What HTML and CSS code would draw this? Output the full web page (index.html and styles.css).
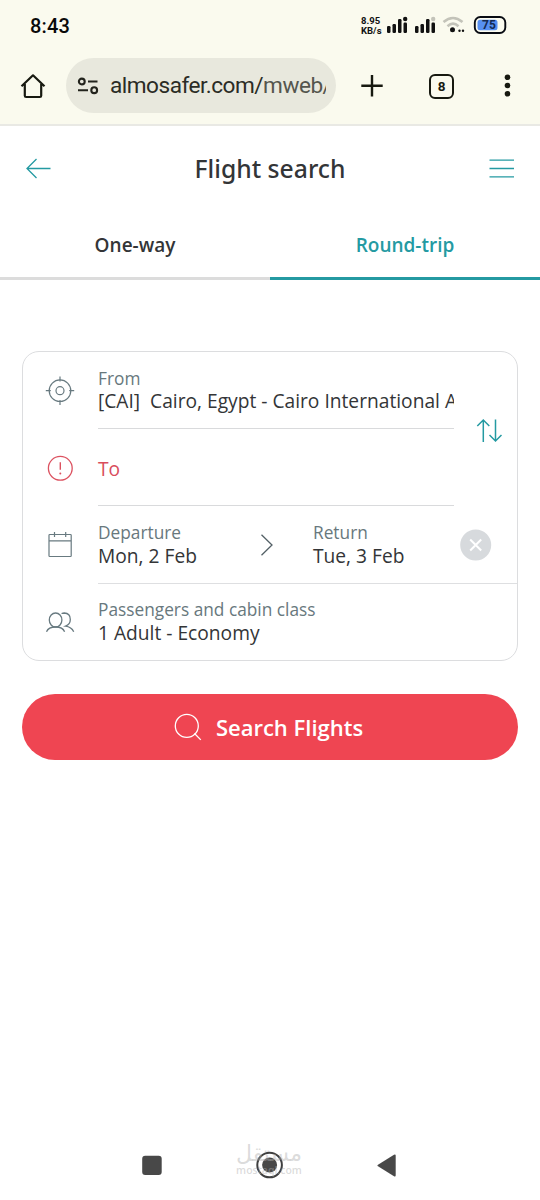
FILE: index.html
```html
<!DOCTYPE html>
<html lang="en">
<head>
<meta charset="utf-8">
<title>Flight search</title>
<link rel="stylesheet" href="styles.css">
</head>
<body>
<div class="browser">
  <div class="status">
    <span class="time">8:43</span>
    <span class="speed"><span>8.95</span><span>KB/s</span></span>
    <svg class="signals" width="150" height="22" viewBox="0 0 150 22">
      <g fill="#111">
        <rect x="2" y="14" width="3.5" height="7" rx="1.2"/><rect x="7.5" y="12" width="3.5" height="9" rx="1.2"/><rect x="13" y="7" width="3.5" height="14" rx="1.2"/><rect x="18.5" y="10.500" width="3.5" height="10.500" rx="1.2"/><circle cx="20.2" cy="7" r="2.2"/>
        <rect x="30" y="14" width="3.5" height="7" rx="1.2"/><rect x="35.500" y="12" width="3.500" height="9" rx="1.2"/><rect x="41" y="7" width="3.500" height="14" rx="1.2"/><rect x="46.500" y="10.500" width="3.500" height="10.500" rx="1.2"/>
        <circle cx="67.500" cy="17.700" r="2.500"/><circle cx="74.500" cy="18.700" r="1.200"/><circle cx="78" cy="18.700" r="1.200"/>
      </g>
      <circle cx="48.200" cy="7" r="2.200" fill="#c3c3b9"/>
      <path d="M58.500 10Q68 2 77.500 10M62.500 14.200Q68 9.200 73.500 14.200" fill="none" stroke="#c3c3b9" stroke-width="2.600"/>
      <rect x="89.800" y="5" width="30.500" height="16" rx="5.500" fill="#fbfbef" stroke="#080b12" stroke-width="1.900"/>
      <path d="M95 7.700h15q2.500 0 2.500 2.500v5.500q0 2.500-2.500 2.500H95q-2.500 0-2.500-2.500v-5.500q0-2.500 2.500-2.500z" fill="#5790f2"/>
      <text x="104" y="17" text-anchor="middle" class="battery">75</text>
    </svg>
  </div>
  <div class="toolbar">
    <svg class="home" width="28" height="28" viewBox="0 0 28 28"><path d="M2.500 14.300L14 3.300 25.500 14.300M5.800 12V23.700q0 1.300 1.300 1.300h13.800q1.300 0 1.300-1.300V12" fill="none" stroke="#171910" stroke-width="2.200" stroke-linejoin="round"/></svg>
    <div class="address">
      <svg width="24" height="20" viewBox="0 0 24 20" fill="none" stroke="#22231c" stroke-width="2.100"><circle cx="4.800" cy="5.500" r="2.900"/><path d="M11 5.500h9.500M1 14.200h10"/><circle cx="17.200" cy="14.200" r="2.900"/></svg>
      <span class="url">almosafer.com/<i>mweb/</i></span>
    </div>
    <svg class="plus" width="24" height="24" viewBox="0 0 24 24"><path d="M1.300 11.700h21.400M12 1v21.400" stroke="#171910" stroke-width="2.400"/></svg>
    <span class="count">8</span>
    <svg class="dots" width="8" height="26" viewBox="0 0 8 26" fill="#171910"><circle cx="3.500" cy="4.200" r="2.800"/><circle cx="3.500" cy="12.500" r="2.800"/><circle cx="3.500" cy="20.800" r="2.800"/></svg>
  </div>
</div>

<header class="header">
  <svg width="26" height="24" viewBox="0 0 26 24"><path d="M25.500 11.500H2M11.500 2L2 11.500 11.500 21" fill="none" stroke="#249aa2" stroke-width="1.300"/></svg>
  <h1>Flight search</h1>
  <svg width="26" height="24" viewBox="0 0 26 24"><path d="M.5 3.200h24.500M.5 11.500h24.500M.5 19.800h24.500" stroke="#249aa2" stroke-width="1.300"/></svg>
</header>

<nav class="tabs">
  <span class="tab">One-way</span>
  <span class="tab active">Round-trip</span>
</nav>

<main>
  <section class="card">
    <div class="places">
      <div class="fields">
        <div class="row">
          <svg class="icon" width="30" height="30" viewBox="0 0 30 30" fill="none" stroke="#687a80" stroke-width="1.200"><circle cx="15" cy="14.700" r="10.800"/><circle cx="15" cy="14.700" r="4"/><path d="M15 .5v5M15 23.900v5M.8 14.700h5M24.200 14.700h5"/></svg>
          <div class="field line"><span class="label">From</span><span class="value airport">[CAI]&nbsp; Cairo, Egypt - Cairo International Airport</span></div>
        </div>
        <div class="row">
          <svg class="icon" width="30" height="30" viewBox="0 0 30 30"><circle cx="15.300" cy="15.300" r="11.900" fill="none" stroke="#dc5260" stroke-width="1.300"/><path d="M15.300 9.300v7.500" stroke="#dc5260" stroke-width="1.400"/><circle cx="15.300" cy="20.500" r="1" fill="#dc5260"/></svg>
          <div class="field line"><span class="to">To</span></div>
        </div>
      </div>
      <svg class="swap" width="26" height="26" viewBox="0 0 26 26" fill="none" stroke="#249aa2" stroke-width="1.500"><path d="M7.300 24V2M1.300 8l6-6 6 6M19.500 1.500v21.500M13.500 17l6 6 6-6"/></svg>
    </div>
    <div class="row">
      <svg class="icon" width="30" height="30" viewBox="0 0 30 30" fill="none" stroke="#687a80" stroke-width="1.200"><rect x="4" y="3.500" width="22.200" height="22" rx=".8"/><path d="M4 9.800h22M9.500 1v5M20.700 1v5"/></svg>
      <div class="field dates">
        <div><span class="label">Departure</span><span class="value">Mon, 2 Feb</span></div>
        <svg class="chevron" width="14" height="24" viewBox="0 0 14 24"><path d="M1.500 1.700L12 12 1.500 22.300" fill="none" stroke="#536066" stroke-width="1.300"/></svg>
        <div class="return"><span class="label">Return</span><span class="value">Tue, 3 Feb</span></div>
        <svg class="clear" width="32" height="32" viewBox="0 0 32 32"><circle cx="15.700" cy="16" r="15.500" fill="#d7dadd"/><path d="M10.200 10.500l11 11M21.200 10.500l-11 11" stroke="#fff" stroke-width="2"/></svg>
      </div>
    </div>
    <div class="row">
      <svg class="icon" width="30" height="30" viewBox="0 0 30 30" fill="none" stroke="#687a80" stroke-width="1.300"><ellipse cx="10.600" cy="12" rx="6.300" ry="7"/><path d="M1.500 23.700Q3.500 19 10.600 19t9 4.700M16.500 5.500Q18 5 19.300 5q6 .2 6 6.500 0 4.800-4.800 6.700 6 .8 8.200 5.500"/></svg>
      <div class="field passengers"><span class="label">Passengers and cabin class</span><span class="value">1 Adult - Economy</span></div>
    </div>
  </section>
  <button class="search">
    <svg width="28" height="28" viewBox="0 0 28 28" fill="none" stroke="#fff" stroke-width="1.300"><circle cx="12.800" cy="12.900" r="11.500"/><path d="M20.500 20.500l6.300 6.400"/></svg>
    <span>Search Flights</span>
  </button>
</main>

<footer class="navbar">
  <svg width="20" height="20" viewBox="0 0 20 20"><rect x=".2" y=".7" width="19.500" height="19.300" rx="3" fill="#484848"/></svg>
  <div class="center">
    <svg width="28" height="28" viewBox="0 0 28 28"><circle cx="13.600" cy="14" r="12.300" fill="#fff" stroke="#3f3f3f" stroke-width="2"/><circle cx="13.600" cy="14" r="7.500" fill="#484848"/></svg>
    <div class="watermark"><span lang="ar" dir="rtl">مستقل</span><small>mostaql.com</small></div>
  </div>
  <svg width="20" height="24" viewBox="0 0 20 24"><path d="M1 11.700L17 1.700q1.700-.8 1.700 1V22.300q0 1.800-1.700 1L1 13.300q-1.200-.8 0-1.600z" fill="#484848"/></svg>
</footer>
</body>
</html>
```
FILE: styles.css
```css
* { box-sizing: border-box; }
body { margin: 0; width: 540px; height: 1200px; display: flex; flex-direction: column; background: #fff; color: #333537; font-family: "Open Sans", "Noto Sans", sans-serif; overflow: hidden; }
svg { display: block; flex: none; }

.browser { height: 126px; background: #fafaee; border-bottom: 2px solid #e9e9e4; font-family: Roboto, sans-serif; }
.status { display: flex; height: 56px; padding: 12px 0 0 30px; align-items: flex-start; }
.time { width: 331px; font-size: 20px; line-height: 28px; font-weight: 500; color: #090909; letter-spacing: .2px; }
.speed { display: flex; flex-direction: column; width: 24px; padding-top: 4px; font-size: 9.500px; line-height: 9.500px; font-weight: 700; color: #111; }
.battery { font: 700 12px Roboto, sans-serif; fill: #142a55; }
.toolbar { display: flex; align-items: center; height: 60px; padding-left: 19px; }
.address { display: flex; align-items: center; width: 270px; height: 55px; margin: -1px 0 0 19px; padding-left: 11px; border-radius: 28px; background: #e8e8dd; }
.url { width: 216px; margin: 1px 0 0 9px; font-size: 22.600px; letter-spacing: -.5px; line-height: 30px; color: #2b2c25; white-space: nowrap; overflow: hidden; }
.url i { font-style: normal; color: #55564e; }
.plus { margin-left: 24px; }
.count { display: flex; align-items: center; justify-content: center; width: 25px; height: 25px; margin-left: 45px; border: 2.500px solid #171910; border-radius: 6px; font-size: 13.500px; font-weight: 700; color: #171910; }
.dots { margin-left: 50px; }

.header { display: flex; align-items: center; justify-content: space-between; height: 86px; padding: 0 25px; }
h1 { margin: 0; font-family: "Noto Sans", "Open Sans", sans-serif; font-size: 24.700px; line-height: 34px; font-weight: 500; }
.tabs { display: flex; height: 68px; }
.tab { flex: 1; padding-top: 19px; border-bottom: 3px solid #dcdcdc; text-align: center; font-size: 19px; line-height: 28px; font-weight: 600; }
.active { color: #249aa2; border-color: #249aa2; }

main { padding: 71px 22px 0; flex: 1; }
.card { height: 310px; border: 1px solid #dcdddf; border-radius: 17px; display: grid; grid-template-rows: 155px 77px 76px; }
.places { display: flex; align-items: center; }
.fields { width: 431px; display: grid; grid-template-rows: 77px 77px; align-self: start; }
.swap { margin-left: 22px; margin-top: 2px; }
.row { display: flex; align-items: center; min-width: 0; }
.icon { margin: 1px 23px 0 22px; }
.field { flex: 1; min-width: 0; height: 100%; display: flex; flex-direction: column; justify-content: center; border-bottom: 1px solid transparent; }
.line { border-bottom-color: #d9dadc; }
.label, .value { display: block; white-space: nowrap; line-height: 23px; }
.label { font-size: 17.300px; color: #68787d; }
.value { font-size: 19.200px; }
.value.airport { overflow: hidden; line-height: 29px; margin: -4px 0 -2px; }
.to { font-size: 19.200px; padding-top: 3px; color: #d94d5c; }
.passengers { padding-bottom: 2px; }
.dates { flex-direction: row; justify-content: flex-start; align-items: center; border-bottom-color: #dedfe1; }
.dates > div { width: 162px; margin-top: -2px; }
.dates > .return { width: 147px; margin-left: 39px; }
.search { display: flex; justify-content: center; align-items: center; gap: 14px; width: 496px; height: 66px; margin-top: 33px; padding: 0 3px 0 0; border: 0; border-radius: 33px; background: #ef4552; color: #fff; font: 600 22px "Open Sans", sans-serif; }

.navbar { display: flex; align-items: center; height: 70px; padding-left: 142px; }
.center { position: relative; margin: 0 93px 0 94px; }
.watermark { position: absolute; left: -20px; top: -9px; width: 66px; display: flex; flex-direction: column; align-items: center; color: rgba(175,175,175,.45); font-family: "DejaVu Sans", sans-serif; }
.watermark span { font-size: 22px; line-height: 24px; }
.watermark small { font: 600 10.500px/9px "Open Sans", sans-serif; }
```
